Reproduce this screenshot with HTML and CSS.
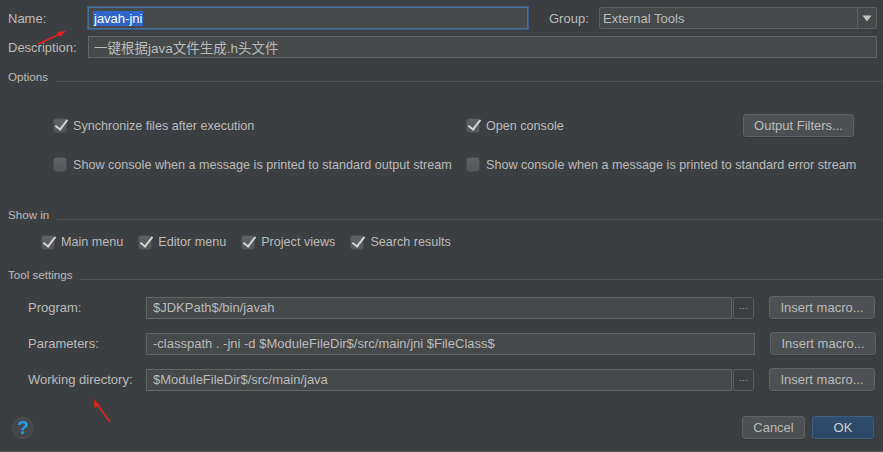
FILE: index.html
```html
<!DOCTYPE html>
<html>
<head>
<meta charset="utf-8">
<link rel="stylesheet" href="styles.css">
</head>
<body>
<div class="dialog">
  <div class="row-top">
    <span class="lbl">Name:</span>
    <div class="field name-field"><span class="sel">javah-jni</span></div>
    <span class="group-lbl">Group:</span>
    <div class="combo">
      <span class="combo-text">External Tools</span>
      <span class="combo-arrow"><svg width="10" height="7" viewBox="0 0 10 7"><path d="M0.5 0.5 H9.5 L5 6.5 Z" fill="#c4c4c4"/></svg></span>
    </div>
  </div>
  <div class="row-top row-desc">
    <span class="lbl">Description:</span>
    <div class="field desc-field">一键根据java文件生成.h头文件</div>
  </div>

  <div class="sec sec-options"><span class="sec-title">Options</span><span class="sec-line"></span></div>
  <div class="opt-row first">
    <label class="cb-item col1"><span class="cb on"></span>Synchronize files after execution</label>
    <label class="cb-item col2"><span class="cb on"></span>Open console</label>
    <button class="btn filters">Output Filters...</button>
  </div>
  <div class="opt-row second">
    <label class="cb-item col1"><span class="cb"></span>Show console when a message is printed to standard output stream</label>
    <label class="cb-item col2"><span class="cb"></span>Show console when a message is printed to standard error stream</label>
  </div>

  <div class="sec sec-show"><span class="sec-title">Show in</span><span class="sec-line"></span></div>
  <div class="show-row">
    <label class="cb-item"><span class="cb on"></span>Main menu</label>
    <label class="cb-item"><span class="cb on"></span>Editor menu</label>
    <label class="cb-item"><span class="cb on"></span>Project views</label>
    <label class="cb-item"><span class="cb on"></span>Search results</label>
  </div>

  <div class="sec sec-tool"><span class="sec-title">Tool settings</span><span class="sec-line"></span></div>
  <div class="tool-row first">
    <span class="tool-lbl">Program:</span>
    <div class="field tool-field short">$JDKPath$/bin/javah</div>
    <button class="dots">···</button>
    <button class="btn macro">Insert macro...</button>
  </div>
  <div class="tool-row">
    <span class="tool-lbl">Parameters:</span>
    <div class="field tool-field long">-classpath . -jni -d $ModuleFileDir$/src/main/jni $FileClass$</div>
    <button class="btn macro">Insert macro...</button>
  </div>
  <div class="tool-row">
    <span class="tool-lbl">Working directory:</span>
    <div class="field tool-field short">$ModuleFileDir$/src/main/java</div>
    <button class="dots">···</button>
    <button class="btn macro">Insert macro...</button>
  </div>

  <div class="footer">
    <span class="help">?</span>
    <span class="spacer"></span>
    <button class="btn cancel">Cancel</button>
    <button class="btn ok">OK</button>
  </div>

  <svg class="annot" width="883" height="452" viewBox="0 0 883 452">
    <line x1="38" y1="44" x2="60" y2="34" stroke="#e3221c" stroke-width="1.6"/>
    <path d="M66 31 L57 32 L60 37 Z" fill="#e3221c"/>
    <line x1="110" y1="422" x2="97" y2="404" stroke="#e3221c" stroke-width="1.6"/>
    <path d="M94 399 L94.5 408 L99.5 405 Z" fill="#e3221c"/>
  </svg>
</div>
</body>
</html>
```
FILE: styles.css
```css
* { box-sizing: border-box; }
html, body {
  margin: 0;
  padding: 0;
  background: #3c3f41;
}
.dialog {
  position: relative;
  width: 883px;
  height: 452px;
  overflow: hidden;
  padding: 7px 6px 0 8px;
  font-family: "Liberation Sans", Arial, "Noto Sans CJK SC", sans-serif;
  font-size: 13px;
  color: #bbbbbb;
  border-bottom: 1px solid #57595b;
}
.row-top {
  display: flex;
  align-items: center;
  height: 22px;
}
.row-desc { margin-top: 7px; }
.lbl { width: 80px; flex: none; }
.field {
  height: 22px;
  background: #45494a;
  border: 1px solid #646464;
  display: flex;
  align-items: center;
  padding-left: 6px;
  white-space: nowrap;
  overflow: hidden;
  color: #bbbbbb;
}
.name-field {
  width: 440px;
  border-color: #466d94;
  box-shadow: 0 0 0 1px #3d5f86;
  padding-left: 4px;
}
.sel {
  background: #2f65ca;
  color: #ffffff;
  padding: 0 1px;
  line-height: 15px;
}
.group-lbl { margin-left: 21px; width: 50px; flex: none; }
.combo {
  width: 278px;
  height: 22px;
  display: flex;
  background: #45494a;
  border: 1px solid #5e6060;
  border-radius: 2px;
}
.combo-text {
  flex: 1;
  padding-left: 3px;
  display: flex;
  align-items: center;
}
.combo-arrow {
  width: 19px;
  border-left: 1px solid #5e6060;
  display: flex;
  align-items: center;
  justify-content: center;
}
.desc-field { flex: 1; padding-left: 5px; font-size: 13.5px; }

.sec { display: flex; margin-right: -6px; height: 14px; }
.sec-title { font-size: 11.6px; line-height: 14px; flex: none; }
.sec-line {
  flex: 1;
  height: 1px;
  background: #505354;
  margin-left: 8px;
  margin-top: 11px;
}
.sec-options { margin-top: 12px; }
.sec-show { margin-top: 32px; }
.sec-tool { margin-top: 18px; }

.opt-row {
  display: flex;
  align-items: center;
  height: 23px;
  padding-left: 45px;
}
.opt-row.first { margin-top: 30px; }
.opt-row.second { margin-top: 16px; }
.col1 { width: 413px; flex: none; }
.col2 { width: 277px; flex: none; }

.cb-item {
  display: flex;
  align-items: center;
  white-space: nowrap;
  font-size: 12.6px;
}
.cb {
  position: relative;
  width: 14px;
  height: 15px;
  flex: none;
  margin-right: 6px;
  background: linear-gradient(#5f6264, #53575a);
  border: 1px solid #494c4e;
  border-radius: 3px;
}
.cb.on::after {
  content: "";
  position: absolute;
  left: 4px;
  top: -2px;
  width: 5px;
  height: 11px;
  border-right: 2px solid #d4d4d4;
  border-bottom: 2px solid #d4d4d4;
  transform: rotate(38deg);
}

.show-row {
  display: flex;
  align-items: center;
  gap: 15px;
  height: 16px;
  margin-top: 12px;
  padding-left: 33px;
}

.btn {
  font-family: inherit;
  font-size: 13px;
  color: #bbbbbb;
  height: 23px;
  background: linear-gradient(#4e5254, #4a4e50);
  border: 1px solid #5e6263;
  border-radius: 3px;
  padding: 0;
  box-shadow: 0 1px 0 #353739;
}
.filters { width: 111px; }

.tool-row {
  display: flex;
  align-items: center;
  height: 23px;
  padding-left: 20px;
  margin-top: 13px;
}
.tool-row.first { margin-top: 14px; }
.tool-lbl { width: 118px; flex: none; }
.tool-field { padding-left: 6px; }
.tool-field.short { width: 586px; }
.tool-field.long { width: 609px; }
.dots {
  width: 21px;
  height: 22px;
  margin-left: 1px;
  background: #3c3f41;
  border: 1px solid #5a5d5f;
  border-radius: 2px;
  color: #aaaaaa;
  font-size: 9px;
  padding: 0;
  font-family: inherit;
}
.macro { width: 106px; margin-left: 15px; }

.footer {
  display: flex;
  align-items: center;
  margin-top: 25px;
  height: 23px;
  padding-left: 4px;
  padding-right: 3px;
}
.help {
  width: 22px;
  height: 22px;
  border-radius: 50%;
  background: #44474a;
  border: 1px solid #4f5255;
  color: #1fa1e6;
  font-weight: bold;
  font-size: 19px;
  display: flex;
  align-items: center;
  justify-content: center;
  line-height: 1;
}
.spacer { flex: 1; }
.cancel { width: 63px; }
.ok {
  width: 62px;
  margin-left: 7px;
  background: linear-gradient(#2f4d6d, #2b4766);
  border-color: #3e5d80;
  color: #d0d0d0;
}

.annot {
  position: absolute;
  left: 0;
  top: 0;
  pointer-events: none;
}
```
